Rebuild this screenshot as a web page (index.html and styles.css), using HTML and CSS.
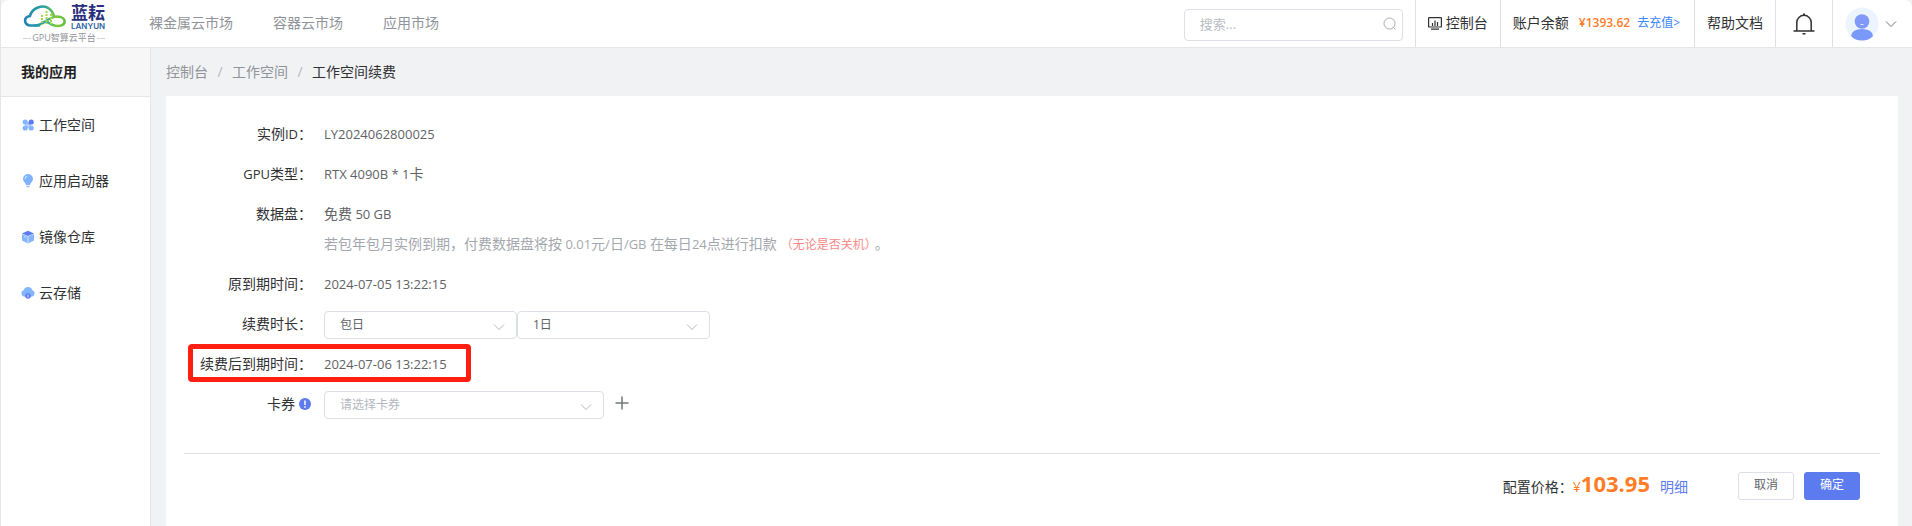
FILE: index.html
```html
<!DOCTYPE html>
<html lang="zh-CN">
<head>
<meta charset="utf-8">
<title>工作空间续费</title>
<link rel="stylesheet" href="styles.css">
</head>
<body>
<div class="app">
  <header class="topbar">
    <a class="logo" href="#">
      <span class="logo-main">
        <svg class="logo-mark" viewBox="0 0 44 24" fill="none" stroke-width="2.600" stroke-linecap="round">
          <defs>
            <linearGradient id="lg" gradientUnits="userSpaceOnUse" x1="0" y1="0" x2="44" y2="0"><stop offset="0" stop-color="#1f7fc0"/><stop offset=".5" stop-color="#2fa59a"/><stop offset=".75" stop-color="#7ccb3a"/><stop offset="1" stop-color="#5cba3c"/></linearGradient>
          </defs>
          <path stroke="url(#lg)" d="M16 21.500H7C1 21 0 13 7 12C9 4 20 0 26 4.500C29 6.500 30 9 31 12"/>
          <path stroke="url(#lg)" d="M12 21.500C21 21.500 24 13 34 12.500C44 12.500 44 22 35 22C30 22 27 20 23 17"/>
          <path stroke="#a8d84a" stroke-width="2" stroke-dasharray="2 1" stroke-linecap="butt" d="M19 11V21M23.500 7V20M28 10V20"/>
        </svg>
        <span class="logo-words"><b class="logo-name">蓝耘</b><b class="logo-latin">LANYUN</b></span>
      </span>
      <span class="logo-sub">GPU智算云平台</span>
    </a>
    <nav class="nav">
      <a href="#">裸金属云市场</a>
      <a href="#">容器云市场</a>
      <a href="#">应用市场</a>
    </nav>
    <label class="search">
      <input type="search" placeholder="搜索..." aria-label="搜索">
      <svg viewBox="0 0 14 14" fill="none" stroke="#a8abb2"><circle cx="6.500" cy="6.500" r="5.500"/><path d="M10.500 10.500L12.500 12.500"/></svg>
    </label>
    <div class="tools">
      <a class="cell console" href="#">
        <svg viewBox="0 0 14 14" fill="none" stroke="#303133" stroke-width="1.200"><rect x=".6" y="1.600" width="12.800" height="9.400" rx=".6"/><path d="M3 13.200H11M4.500 7V10M7 4.500V10M9.500 6V10"/></svg>
        控制台
      </a>
      <div class="cell account">账户余额<b class="balance">¥1393.62</b><a class="recharge" href="#">去充值&gt;</a></div>
      <a class="cell" href="#">帮助文档</a>
      <button class="cell bell" aria-label="通知">
        <svg viewBox="0 0 22 22" fill="none" stroke="#303133" stroke-width="1.500"><path d="M.5 18H21.500M3.800 18V9.500A7.200 7.200 0 0 1 18.200 9.500V18M9.500 20.800H12.500M10 1.200H12"/></svg>
      </button>
      <button class="cell user" aria-label="用户菜单">
        <svg class="avatar" viewBox="0 0 34 34"><circle cx="17" cy="17" r="16.500" fill="#ecf5ff"/><path d="M6 29Q7 22 17 22T28 29Q24 33.500 17 33.500T6 29Z" fill="#7b98fb"/><circle cx="17" cy="14.500" r="7.300" fill="#8099f8"/><path d="M15.500 17.500H18.500" stroke="#dfe7ff"/></svg>
        <svg class="caret" viewBox="0 0 12 8" fill="none" stroke="#73767a"><path d="M1 1.500L6 6.500L11 1.500"/></svg>
      </button>
    </div>
  </header>
  <div class="body">
    <aside class="sidebar">
      <h2 class="side-title">我的应用</h2>
      <nav class="side-nav">
        <a href="#"><svg viewBox="0 0 14 14" fill="#84b6ff"><rect x="4" y="4" width="6" height="6" fill="#b5d2ff"/><circle cx="4.200" cy="4" r="2.600"/><circle cx="4.200" cy="10" r="2.600"/><circle cx="10.200" cy="10" r="2.600"/><path d="M7.600 6.600V4A2.600 2.600 0 1 1 10.200 6.600Z" fill="#5b7bee"/></svg>工作空间</a>
        <a href="#"><svg viewBox="0 0 14 14"><path d="M7 0A5 5 0 0 1 12 5C12 7.500 9.500 8.500 9 11H5C4.500 8.500 2 7.500 2 5A5 5 0 0 1 7 0Z" fill="#7fb3ff"/><path d="M4 5Q4 2.500 6.500 2" fill="none" stroke="#d9e9ff"/><path d="M5.500 12.500H8.500" stroke="#8fb6f5" stroke-width="1.500"/></svg>应用启动器</a>
        <a href="#"><svg viewBox="0 0 14 14"><path d="M1 4L7 6.500L13 4V10.500L7 13.500L1 10.500Z" fill="#84b6ff"/><path d="M7 .8L13 3.400L7 6L1 3.400Z" fill="#5b7bee"/><path d="M7 6V13.500M3 6.500L5 7.500" stroke="#d0e2ff"/></svg>镜像仓库</a>
        <a href="#"><svg viewBox="0 0 14 14"><path d="M3.400 10.800A3.400 3.400 0 0 1 2.700 4.200A4.500 4.500 0 0 1 11.300 4.200A3.400 3.400 0 0 1 10.600 10.800Z" fill="#84b6ff"/><circle cx="7" cy="10" r="2.700" fill="#5b7bee"/><path d="M7 8.500V11.500" stroke="#dfe9ff"/></svg>云存储</a>
      </nav>
    </aside>
    <main class="content">
      <nav class="crumbs"><a href="#">控制台</a><i>/</i><a href="#">工作空间</a><i>/</i><span>工作空间续费</span></nav>
      <section class="card">
        <form class="form">
          <div class="row"><span class="label">实例<span class="num">ID</span>：</span><div class="value"><span class="num">LY2024062800025</span></div></div>
          <div class="row"><span class="label"><span class="num">GPU</span>类型：</span><div class="value"><span class="num">RTX 4090B * 1</span>卡</div></div>
          <div class="row"><span class="label">数据盘：</span><div class="value">免费<span class="num"> 50 GB</span>
            <p class="note">若包年包月实例到期，付费数据盘将按<span class="num"> 0.01</span>元<span class="num">/</span>日<span class="num">/GB </span>在每日<span class="num">24</span>点进行扣款<em>（无论是否关机）</em>。</p></div></div>
          <div class="row"><span class="label">原到期时间：</span><div class="value"><span class="num">2024-07-05 13:22:15</span></div></div>
          <div class="row"><label class="label" for="unit">续费时长：</label><div class="value fields">
            <select id="unit"><option>包日</option></select><select aria-label="续费数量"><option>1日</option></select></div></div>
          <div class="row marked"><span class="label">续费后到期时间：</span><div class="value"><span class="num">2024-07-06 13:22:15</span></div></div>
          <div class="row"><label class="label tipped" for="coupon">卡券<svg class="info" viewBox="0 0 12 12"><circle cx="6" cy="6" r="6" fill="#5b7bee"/><path d="M6 2.500V7M6 8.200V9.700" stroke="#fff" stroke-width="1.500"/></svg></label><div class="value fields">
            <select id="coupon" class="coupon"><option>请选择卡券</option></select>
            <button type="button" class="plus" aria-label="添加卡券"><svg viewBox="0 0 14 14" stroke="#73767a" stroke-width="1.500"><path d="M.5 7H13.500M7 .5V13.500"/></svg></button></div></div>
        </form>
        <footer class="actions">
          <div class="price">配置价格：<span class="money">¥<b>103.95</b></span><a href="#">明细</a></div>
          <button class="btn">取消</button>
          <button class="btn primary">确定</button>
        </footer>
      </section>
    </main>
  </div>
</div>
</body>
</html>
```
FILE: styles.css
```css
*, *::before, *::after { box-sizing: border-box; }
body {
  margin: 0;
  background: #f1f2f4;
  color: #303133;
  font: 14px/20px "Open Sans", "Noto Sans CJK SC", sans-serif;
}
a { color: inherit; text-decoration: none; }
svg { display: block; flex: none; }
button, input, select { font: inherit; color: inherit; }
.num { font-size: 13px; line-height: 1; white-space: pre; }
.app {
  display: flex;
  flex-direction: column;
  min-height: 100vh;
  border-left: 1px solid #e4e6ea;
}
.topbar {
  display: flex;
  height: 48px;
  background: #fff;
  border-bottom: 1px solid #e6e6e6;
  border-radius: 8px 8px 0 0;
}
.logo { width: 82px; margin: 4px 44px 0 22px; }
.logo-main { display: flex; gap: 4px; }
.logo-mark { width: 44px; height: 24px; }
.logo-words { display: flex; flex-direction: column; color: #2a2f7c; }
.logo-name { font-size: 17px; line-height: 17px; }
.logo-latin { font: 600 8px/10px Inter, sans-serif; color: #2c62a4; }
.logo-sub {
  display: flex;
  align-items: center;
  gap: 1px;
  font-size: 9px;
  line-height: 14px;
  color: #909399;
  white-space: nowrap;
}
.logo-sub::before, .logo-sub::after { content: ""; flex: 1; height: 1px; background: #d0d2d6; }
.nav { display: flex; align-items: center; gap: 40px; color: #909399; padding-bottom: 2px; }
.search { position: relative; width: 219px; margin: 9px 12px 6px auto; }
.search input {
  width: 100%;
  height: 32px;
  padding: 0 30px 2px 15px;
  border: 1px solid #dcdfe6;
  border-radius: 4px;
  background: #fff;
  font-size: 13px;
  outline: 0;
}
.search input::placeholder { color: #b9bcc4; }
.search svg { position: absolute; right: 6px; top: 8px; width: 14px; height: 14px; }
.tools { display: flex; }
.cell {
  display: flex;
  align-items: center;
  padding: 0 12px 2px;
  border: 0;
  border-left: 1px solid #dcdfe6;
  background: none;
  white-space: nowrap;
}
.console { gap: 4px; }
.console svg { width: 14px; height: 14px; }
.account { padding-right: 14px; }
.balance { margin: 0 7px 0 10px; font-size: 12px; font-weight: 600; color: #ff7d27; }
.recharge { font-size: 12px; color: #3a86f7; }
.bell { padding: 0 17px; }
.bell svg { width: 22px; height: 22px; }
.user { gap: 6px; padding: 0 15px 0 12px; }
.avatar { width: 34px; height: 34px; }
.caret { width: 12px; height: 8px; }
.body { display: flex; flex: 1; }
.sidebar { width: 150px; background: #fff; border-right: 1px solid #e4e4e6; }
.side-title {
  margin: 0;
  padding: 14px 20px;
  background: #f7f7f7;
  border-bottom: 1px solid #e6e6e6;
  font-size: 14px;
  color: #222;
}
.side-nav a { display: flex; align-items: center; gap: 4px; height: 56px; padding-left: 20px; }
.side-nav svg { width: 14px; height: 14px; }
.content { display: flex; flex-direction: column; flex: 1; padding: 0 14px 0 15px; }
.crumbs { display: flex; padding: 14px 0; color: #909399; }
.crumbs i { width: 24px; text-align: center; font-style: normal; color: #b4b8c0; }
.crumbs span { color: #303133; }
.card { flex: 1; padding: 18px 18px 0; background: #fff; }
.form { padding-bottom: 29px; border-bottom: 1px solid #dcdfe6; }
.row { position: relative; display: flex; line-height: 40px; }
.label {
  display: flex;
  justify-content: flex-end;
  align-items: center;
  width: 128px;
  height: 40px;
  margin-right: 12px;
  white-space: nowrap;
}
.tipped { width: 127px; margin-right: 13px; }
.info { width: 12px; height: 12px; margin-left: 4px; }
.value { color: #606266; }
.note { margin: 0 0 10px; line-height: 20px; color: #a4a7ad; }
.note em { margin: 0 4px; font-size: 12px; line-height: 1; font-style: normal; color: #f78989; }
.fields { display: flex; align-items: center; height: 40px; padding-top: 2px; }
.marked::after {
  content: "";
  position: absolute;
  left: 4px;
  top: 0;
  width: 283px;
  height: 38px;
  border: 5px solid #ff1f10;
  border-radius: 4px;
}
select {
  appearance: none;
  width: 193px;
  height: 28px;
  padding: 0 30px 0 15px;
  border: 1px solid #dcdfe6;
  border-radius: 4px;
  background: #fff url("data:image/svg+xml,%3Csvg xmlns='http://www.w3.org/2000/svg' width='12' height='8' fill='none' stroke='%23b4b8c0'%3E%3Cpath d='M1 1.500L6 6.500L11 1.500'/%3E%3C/svg%3E") no-repeat right 11px top 11px;
  font-size: 12px;
}
.fields select { line-height: 20px; }
.coupon { width: 280px; color: #b4b8c0; }
.plus { margin-left: 11px; padding: 0 0 4px; border: 0; background: none; }
.plus svg { width: 14px; height: 14px; }
.actions { display: flex; justify-content: flex-end; align-items: center; gap: 10px; padding: 18px 20px; }
.price { display: flex; align-items: baseline; margin-right: 40px; padding-bottom: 2px; }
.money { color: #ff7d27; margin-right: 10px; }
.money b { font-size: 22px; }
.price a { color: #5b7bee; }
.btn {
  width: 56px;
  height: 28px;
  padding: 0 0 2px;
  border: 1px solid #dcdfe6;
  border-radius: 3px;
  background: #fff;
  color: #606266;
  font-size: 12px;
}
.primary { border-color: #5b7bee; background: #5b7bee; color: #fff; }
```
